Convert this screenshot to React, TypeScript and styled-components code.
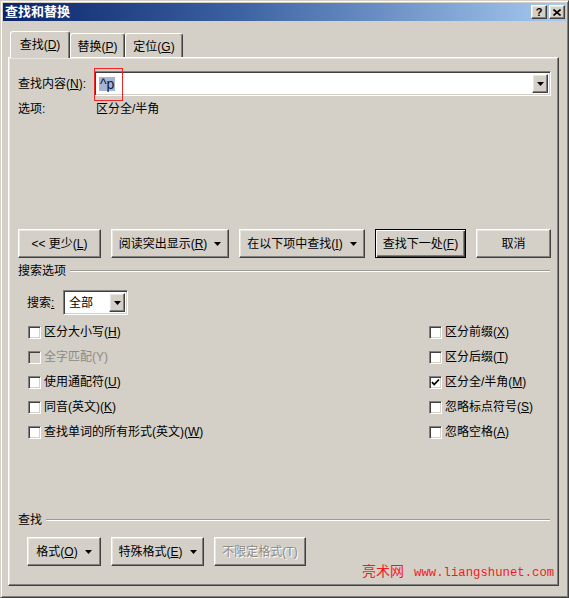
import React from 'react';
import styled, { createGlobalStyle, css } from 'styled-components';

const GlobalStyle = createGlobalStyle`
	html, body {
		margin: 0;
		padding: 0;
		background: #d4d0c8;
	}
	body {
		font-family: 'Liberation Sans', 'Noto Sans CJK SC', sans-serif;
		font-size: 12px;
		color: #000;
	}
	u {
		text-decoration: underline;
		text-underline-offset: 1px;
	}
`;

const raised = css`
	border: 1px solid;
	border-color: #ffffff #404040 #404040 #ffffff;
	box-shadow: inset -1px -1px #808080, inset 1px 1px #e8e6e0;
	background: #d4d0c8;
`;

const sunken = css`
	border: 1px solid;
	border-color: #808080 #ffffff #ffffff #808080;
	box-shadow: inset 1px 1px #404040, inset -1px -1px #d4d0c8;
	background: #fff;
`;

const Window = styled.div`
	box-sizing: border-box;
	width: 569px;
	height: 598px;
	padding: 2px;
	border: 1px solid;
	border-color: #d4d0c8 #404040 #404040 #d4d0c8;
	box-shadow: inset 1px 1px #fff, inset -1px -1px #808080;
	background: #d4d0c8;
	display: flex;
	flex-direction: column;
`;

const TitleBar = styled.div`
	height: 18px;
	display: flex;
	align-items: center;
	justify-content: space-between;
	padding: 0 1px 0 2px;
	background: linear-gradient(to right, #0a246a 0%, #3a5fa0 40%, #a6caf0 100%);
	color: #fff;
	font-weight: bold;
	font-size: 13px;
	line-height: 18px;
`;

const CaptionButtons = styled.div`
	display: flex;
	gap: 2px;
`;

const CaptionButton = styled.div`
	${raised};
	box-sizing: border-box;
	width: 16px;
	height: 14px;
	display: flex;
	align-items: center;
	justify-content: center;
	color: #000;
	font-family: 'Liberation Sans', sans-serif;
	font-weight: bold;
	font-size: 11px;
	line-height: 12px;
`;

const TabStrip = styled.div`
	display: flex;
	align-items: flex-end;
	height: 26px;
	margin: 10px 0 0 7px;
	position: relative;
	z-index: 1;
`;

const Tab = styled.div<{ $active?: boolean; $w: number }>`
	box-sizing: border-box;
	width: ${(p) => p.$w}px;
	height: ${(p) => (p.$active ? 27 : 24)}px;
	margin-bottom: ${(p) => (p.$active ? -1 : 0)}px;
	display: flex;
	align-items: center;
	justify-content: center;
	padding-top: ${(p) => (p.$active ? 0 : 2)}px;
	background: #d4d0c8;
	border: 1px solid;
	border-bottom: none;
	border-color: #ffffff #404040 transparent #ffffff;
	box-shadow: inset -1px 0 #808080;
	border-radius: 3px 3px 0 0;
	line-height: 16px;
`;

const Panel = styled.div`
	position: relative;
	box-sizing: border-box;
	margin-left: 5px;
	width: 551px;
	height: 529px;
	border: 1px solid;
	border-color: #ffffff #404040 #404040 #ffffff;
	box-shadow: inset -1px -1px #808080, inset 1px 1px #e8e6e0;
	padding: 1px;
`;

const FindRow = styled.div`
	display: flex;
	align-items: center;
	margin-top: 12px;
	padding-left: 8px;
	height: 25px;
`;

const Label = styled.div<{ $w?: number; $disabled?: boolean }>`
	width: ${(p) => (p.$w ? `${p.$w}px` : 'auto')};
	flex: none;
	line-height: 16px;
	white-space: nowrap;
	color: ${(p) => (p.$disabled ? '#8c8a84' : '#000')};
`;

const Combo = styled.div<{ $w: number }>`
	${sunken};
	position: relative;
	box-sizing: border-box;
	width: ${(p) => p.$w}px;
	height: 25px;
	display: flex;
	align-items: center;
	justify-content: space-between;
	padding: 2px;
`;

const ComboText = styled.span`
	padding-left: 3px;
	line-height: 16px;
`;

const Selected = styled.span`
	background: #a7b4d2;
	color: #0c1a3a;
	font-size: 14px;
	line-height: 14px;
	padding: 0 1px;
	margin-left: 2px;
`;

const ComboButton = styled.div`
	${raised};
	box-sizing: border-box;
	width: 16px;
	height: 19px;
	display: flex;
	align-items: center;
	justify-content: center;
`;

const Mark = styled.div`
	position: absolute;
	left: -1px;
	top: -4px;
	width: 27px;
	height: 31px;
	border: 1px solid #f02626;
`;

const InfoRow = styled.div`
	display: flex;
	margin-top: 5px;
	padding-left: 8px;
	height: 16px;
`;

const ButtonRow = styled.div<{ $top: number; $left: number }>`
	display: flex;
	gap: 10px;
	margin-top: ${(p) => p.$top}px;
	padding-left: ${(p) => p.$left}px;
`;

const Button = styled.div<{ $w: number; $default?: boolean; $disabled?: boolean }>`
	${raised};
	box-sizing: border-box;
	width: ${(p) => p.$w}px;
	height: 29px;
	display: flex;
	align-items: center;
	justify-content: center;
	gap: 7px;
	line-height: 16px;
	color: ${(p) => (p.$disabled ? '#8c8a84' : '#000')};
	text-shadow: ${(p) => (p.$disabled ? '1px 1px #fff' : 'none')};
	${(p) =>
		p.$default &&
		css`
			border-color: #000;
			box-shadow: inset 1px 1px #fff, inset -1px -1px #404040, inset -2px -2px #808080;
		`}
`;

const SectionHeader = styled.div<{ $top: number }>`
	display: flex;
	align-items: center;
	gap: 4px;
	height: 16px;
	margin-top: ${(p) => p.$top}px;
	padding: 0 7px 0 8px;
	line-height: 16px;
	&::after {
		content: '';
		flex: 1;
		height: 0;
		border-top: 1px solid #9c9a94;
		border-bottom: 1px solid #fff;
	}
`;

const SearchRow = styled.div`
	display: flex;
	align-items: center;
	margin-top: 11px;
	padding-left: 17px;
	height: 25px;
`;

const CheckGrid = styled.div`
	display: grid;
	grid-template-columns: 401px 1fr;
	grid-auto-rows: 16px;
	row-gap: 9px;
	margin-top: 9px;
	padding-left: 18px;
`;

const CheckItem = styled.div`
	display: flex;
	align-items: center;
	gap: 3px;
`;

const Box = styled.div<{ $disabled?: boolean }>`
	${sunken};
	box-sizing: border-box;
	width: 13px;
	height: 13px;
	background: ${(p) => (p.$disabled ? '#d4d0c8' : '#fff')};
	display: flex;
	align-items: center;
	justify-content: center;
`;

const Watermark = styled.div`
	position: absolute;
	left: 353px;
	top: 505px;
	color: #f01c1c;
	font-size: 14px;
	line-height: 16px;
	white-space: nowrap;
	display: flex;
	align-items: baseline;
	gap: 10px;
`;

const Url = styled.span`
	font-family: 'Liberation Mono', monospace;
	font-size: 12.3px;
`;

const Arrow = () => (
	<svg width="7" height="4" viewBox="0 0 7 4">
		<path d="M0 0H7L3.5 4Z" fill="#000" />
	</svg>
);

const Check = () => (
	<svg width="9" height="9" viewBox="0 0 9 9">
		<path d="M1 4.2L3.2 6.5L8 1.5" stroke="#000" strokeWidth="1.8" fill="none" />
	</svg>
);

type Option = { text: string; key: string; checked?: boolean; disabled?: boolean };

const left: Option[] = [
	{ text: '区分大小写', key: 'H' },
	{ text: '全字匹配', key: 'Y', disabled: true },
	{ text: '使用通配符', key: 'U' },
	{ text: '同音(英文)', key: 'K' },
	{ text: '查找单词的所有形式(英文)', key: 'W' },
];

const right: Option[] = [
	{ text: '区分前缀', key: 'X' },
	{ text: '区分后缀', key: 'T' },
	{ text: '区分全/半角', key: 'M', checked: true },
	{ text: '忽略标点符号', key: 'S' },
	{ text: '忽略空格', key: 'A' },
];

const CheckOption = ({ o }: { o: Option }) => (
	<CheckItem>
		<Box $disabled={o.disabled}>{o.checked && <Check />}</Box>
		<Label $disabled={o.disabled}>
			{o.text}({o.disabled ? o.key : <u>{o.key}</u>})
		</Label>
	</CheckItem>
);

export default function App() {
	const rows = left.map((o, i) => [o, right[i]]);
	return (
		<>
			<GlobalStyle />
			<Window>
				<TitleBar>
					<span>查找和替换</span>
					<CaptionButtons>
						<CaptionButton>?</CaptionButton>
						<CaptionButton>
							<svg width="8" height="7" viewBox="0 0 8 7">
								<path d="M0.5 0.5L7.5 6.5M7.5 0.5L0.5 6.5" stroke="#000" strokeWidth="1.6" />
							</svg>
						</CaptionButton>
					</CaptionButtons>
				</TitleBar>
				<TabStrip>
					<Tab $active $w={60}>
						查找(<u>D</u>)
					</Tab>
					<Tab $w={55}>
						替换(<u>P</u>)
					</Tab>
					<Tab $w={58}>
						定位(<u>G</u>)
					</Tab>
				</TabStrip>
				<Panel>
					<FindRow>
						<Label $w={76}>
							查找内容(<u>N</u>):
						</Label>
						<Combo $w={457}>
							<Selected>^p</Selected>
							<ComboButton>
								<Arrow />
							</ComboButton>
							<Mark />
						</Combo>
					</FindRow>
					<InfoRow>
						<Label $w={78}>选项:</Label>
						<Label>区分全/半角</Label>
					</InfoRow>
					<ButtonRow $top={112} $left={8}>
						<Button $w={83}>
							<span>
								&lt;&lt; 更少(<u>L</u>)
							</span>
						</Button>
						<Button $w={118}>
							<span>
								阅读突出显示(<u>R</u>)
							</span>
							<Arrow />
						</Button>
						<Button $w={126}>
							<span>
								在以下项中查找(<u>I</u>)
							</span>
							<Arrow />
						</Button>
						<Button $w={91} $default>
							<span>
								查找下一处(<u>F</u>)
							</span>
						</Button>
						<Button $w={75}>取消</Button>
					</ButtonRow>
					<SectionHeader $top={5}>搜索选项</SectionHeader>
					<SearchRow>
						<Label $w={36}>
							搜索<u>:</u>
						</Label>
						<Combo $w={65}>
							<ComboText>全部</ComboText>
							<ComboButton>
								<Arrow />
							</ComboButton>
						</Combo>
					</SearchRow>
					<CheckGrid>
						{rows.map(([l, r]) => (
							<React.Fragment key={l.key}>
								<CheckOption o={l} />
								<CheckOption o={r} />
							</React.Fragment>
						))}
					</CheckGrid>
					<SectionHeader $top={72}>查找</SectionHeader>
					<ButtonRow $top={9} $left={17}>
						<Button $w={74}>
							<span>
								格式(<u>O</u>)
							</span>
							<Arrow />
						</Button>
						<Button $w={93}>
							<span>
								特殊格式(<u>E</u>)
							</span>
							<Arrow />
						</Button>
						<Button $w={92} $disabled>
							不限定格式(T)
						</Button>
					</ButtonRow>
					<Watermark>
						<span>亮术网</span>
						<Url>www.liangshunet.com</Url>
					</Watermark>
				</Panel>
			</Window>
		</>
	);
}
